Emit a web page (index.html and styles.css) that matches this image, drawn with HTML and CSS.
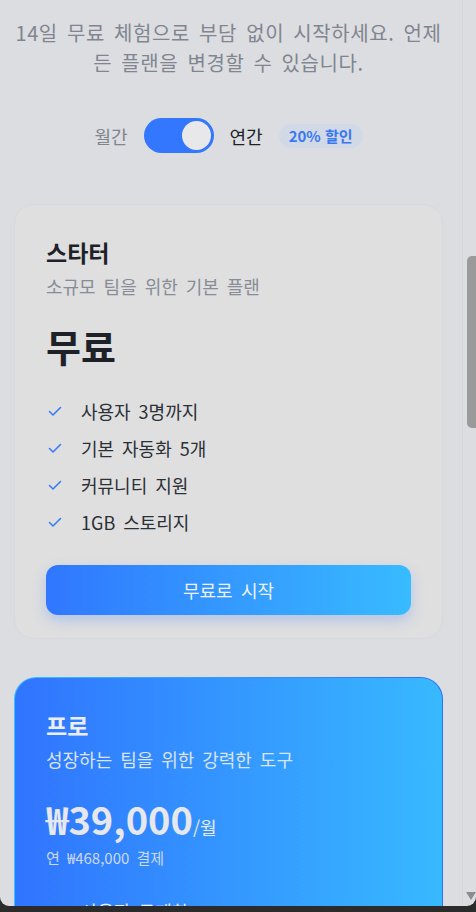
FILE: index.html
```html
<!DOCTYPE html>
<html lang="ko">
    <head>
        <meta charset="UTF-8">
        <meta name="viewport" content="width=device-width, initial-scale=1.0">
        <title>요금제</title>
        <link rel="stylesheet" href="styles.css">
    </head>
    <body>
        <div id="window">
            <div id="frame">
                <div class="page">
                    <p class="lead">14일 무료 체험으로 부담 없이 시작하세요. 언제든 플랜을 변경할 수 있습니다.</p>

                    <div class="billing">
                        <span class="period">월간</span>
                        <button class="switch on" onclick="this.classList.toggle('on')"><span class="knob"></span></button>
                        <span class="period active">연간</span>
                        <span class="badge">20% 할인</span>
                    </div>

                    <div class="plan">
                        <h3>스타터</h3>
                        <p class="desc">소규모 팀을 위한 기본 플랜</p>
                        <div class="price">무료</div>
                        <ul class="features">
                            <li><svg viewBox="0 0 16 16"><polyline points="2.5,8.5 6,12 13.5,4.5"/></svg>사용자 3명까지</li>
                            <li><svg viewBox="0 0 16 16"><polyline points="2.5,8.5 6,12 13.5,4.5"/></svg>기본 자동화 5개</li>
                            <li><svg viewBox="0 0 16 16"><polyline points="2.5,8.5 6,12 13.5,4.5"/></svg>커뮤니티 지원</li>
                            <li><svg viewBox="0 0 16 16"><polyline points="2.5,8.5 6,12 13.5,4.5"/></svg>1GB 스토리지</li>
                        </ul>
                        <button class="cta">무료로 시작</button>
                    </div>

                    <div class="plan pro">
                        <h3>프로</h3>
                        <p class="desc">성장하는 팀을 위한 강력한 도구</p>
                        <div class="price">₩39,000<span class="unit">/월</span></div>
                        <p class="yearly">연 ₩468,000 결제</p>
                        <ul class="features">
                            <li><svg viewBox="0 0 16 16"><polyline points="2.5,8.5 6,12 13.5,4.5"/></svg>사용자 무제한</li>
                            <li><svg viewBox="0 0 16 16"><polyline points="2.5,8.5 6,12 13.5,4.5"/></svg>고급 자동화 무제한</li>
                            <li><svg viewBox="0 0 16 16"><polyline points="2.5,8.5 6,12 13.5,4.5"/></svg>우선 이메일 지원</li>
                            <li><svg viewBox="0 0 16 16"><polyline points="2.5,8.5 6,12 13.5,4.5"/></svg>100GB 스토리지</li>
                        </ul>
                        <button class="cta">프로 시작하기</button>
                    </div>

                    <div class="plan">
                        <h3>엔터프라이즈</h3>
                        <p class="desc">대규모 조직을 위한 맞춤 솔루션</p>
                        <div class="price">문의</div>
                        <ul class="features">
                            <li><svg viewBox="0 0 16 16"><polyline points="2.5,8.5 6,12 13.5,4.5"/></svg>전담 매니저</li>
                            <li><svg viewBox="0 0 16 16"><polyline points="2.5,8.5 6,12 13.5,4.5"/></svg>SSO 및 감사 로그</li>
                            <li><svg viewBox="0 0 16 16"><polyline points="2.5,8.5 6,12 13.5,4.5"/></svg>무제한 스토리지</li>
                        </ul>
                        <button class="cta">영업팀 문의</button>
                    </div>
                </div>
            </div>
            <div class="scrollbar"><div class="thumb"></div><div class="arrow"></div></div>
        </div>
    </body>
</html>
```

FILE: styles.css
```css
body {
    margin:0;
    background:#2b2b2b;
    font-family:"Noto Sans CJK KR", "Noto Sans", sans-serif;
    word-spacing:0.18em;
}
#window {
    position:relative;
    height:906px;
    background:#dcdde0;
    border-radius:0 0 9px 9px;
    overflow:hidden;
}
#frame {
    height:100%;
    overflow-y:auto;
}
.scrollbar {
    position:absolute;
    top:0;
    right:0;
    bottom:0;
    width:13px;
    border-left:1px solid #d6d7da;
    display:flex;
    flex-direction:column;
    align-items:flex-end;
}
.thumb {
    margin-top:256px;
    width:9px;
    height:172px;
    background:#9a9a9a;
    border-radius:5px 0 0 5px;
}
.arrow {
    margin-top:auto;
    margin-bottom:6px;
    width:0;
    height:0;
    border-left:5px solid transparent;
    border-right:5px solid transparent;
    border-top:8px solid #8c8c8c;
}
.page {
    max-width:457px;
    padding:0 14px 40px;
    box-sizing:border-box;
}
.lead {
    margin:0;
    padding-top:18px;
    font-size:20px;
    line-height:30px;
    letter-spacing:0.6px;
    color:#80858f;
    text-align:center;
}
.billing {
    display:flex;
    align-items:center;
    justify-content:center;
    gap:16px;
    margin-top:40px;
    height:35px;
}
.period {
    font-size:18px;
    color:#80858f;
}
.period.active {
    color:#1e2228;
}
.switch {
    width:70px;
    height:35px;
    border:none;
    border-radius:18px;
    background:#b9bcc2;
    padding:3px;
    display:flex;
    cursor:pointer;
}
.switch.on {
    background:#3377ff;
    justify-content:flex-end;
}
.knob {
    width:29px;
    height:29px;
    border-radius:50%;
    background:#e8e8ea;
}
.badge {
    background:#d1d8e6;
    color:#3a78f2;
    font-size:15px;
    line-height:20px;
    font-weight:700;
    word-spacing:0;
    padding:2px 10px;
    border-radius:12px;
}
.plan {
    margin-top:51px;
    background:#dfdfdf;
    border:1px solid #d8d9dc;
    border-radius:20px;
    padding:31px 31px 23px;
}
.plan + .plan {
    margin-top:38px;
}
.plan h3 {
    margin:0;
    font-size:23px;
    line-height:32px;
    font-weight:700;
    color:#1e2228;
}
.desc {
    margin:6px 0 0;
    font-size:18px;
    line-height:24px;
    color:#878c96;
}
.price {
    margin-top:24px;
    font-size:38px;
    line-height:48px;
    font-weight:700;
    color:#1e2228;
    word-spacing:0;
}
.unit {
    font-size:18px;
    font-weight:400;
}
.yearly {
    margin:0;
    font-size:15px;
    line-height:20px;
}
.features {
    list-style:none;
    margin:29px 0 0;
    padding:0;
    display:flex;
    flex-direction:column;
    gap:13px;
}
.features li {
    display:flex;
    align-items:center;
    gap:18px;
    font-size:18px;
    line-height:24px;
    color:#2b2f36;
}
.features svg {
    width:16px;
    height:16px;
    margin-left:1px;
    flex-shrink:0;
    fill:none;
    stroke:#3a7cf5;
    stroke-width:1.6;
    stroke-linecap:round;
    stroke-linejoin:round;
}
.cta {
    display:block;
    width:100%;
    height:50px;
    margin-top:31px;
    border:none;
    border-radius:12px;
    background:linear-gradient(90deg, #3077ff, #38bbff);
    color:#eef1f6;
    font-family:inherit;
    font-size:18px;
    word-spacing:0.18em;
    box-shadow:0 6px 14px rgba(51, 119, 255, 0.25);
    cursor:pointer;
}
.pro {
    border:1px solid transparent;
    border-radius:22px;
    background:linear-gradient(90deg, #3074ff, #38b9ff) padding-box,
        linear-gradient(90deg, #38c0ff, #2f6fff) border-box;
    color:#e4e8f0;
}
.pro h3 {
    color:#eceef2;
}
.pro .desc {
    color:#dbe4f3;
}
.pro .price {
    color:#e6e8ee;
}
.pro .yearly {
    color:#cbd9f3;
    margin-top:-3px;
}
.pro .features {
    margin-top:31px;
}
.pro .features li {
    color:#eef1f6;
}
.pro .features svg {
    stroke:#e4e8f0;
}
.pro .cta {
    background:#e4e6ea;
    color:#3077ff;
    box-shadow:none;
}
```
